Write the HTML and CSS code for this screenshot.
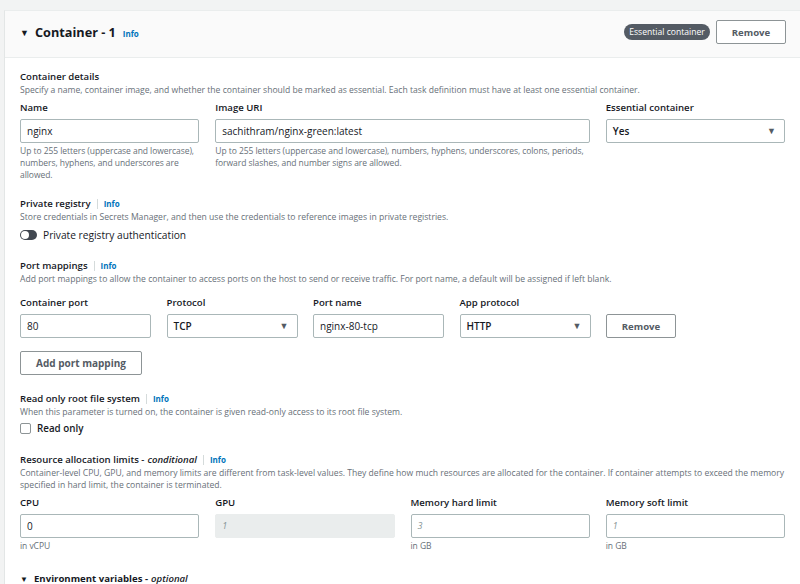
FILE: index.html
```html
<!DOCTYPE html>
<html>
<head>
<meta charset="utf-8">
<link rel="stylesheet" href="styles.css">
</head>
<body>
<div class="page">
  <div class="card">
    <div class="card-header">
      <span class="caret">&#9660;</span>
      <span class="title">Container - 1</span>
      <span class="info info-title">Info</span>
      <span class="spacer"></span>
      <span class="badge">Essential container</span>
      <button class="btn btn-header">Remove</button>
    </div>
    <div class="card-body">
      <section class="sec sec-first">
        <div class="sec-head">Container details</div>
        <div class="desc">Specify a name, container image, and whether the container should be marked as essential. Each task definition must have at least one essential container.</div>
        <div class="grid4 mt5">
          <div class="field">
            <div class="label">Name</div>
            <div class="input">nginx</div>
            <div class="help">Up to 255 letters (uppercase and lowercase), numbers, hyphens, and underscores are allowed.</div>
          </div>
          <div class="field span2">
            <div class="label">Image URI</div>
            <div class="input">sachithram/nginx-green:latest</div>
            <div class="help">Up to 255 letters (uppercase and lowercase), numbers, hyphens, underscores, colons, periods, forward slashes, and number signs are allowed.</div>
          </div>
          <div class="field">
            <div class="label">Essential container</div>
            <div class="input select">Yes<span class="arrow">&#9660;</span></div>
          </div>
        </div>
      </section>

      <section class="sec">
        <div class="sec-head">Private registry <span class="info info-sep">Info</span></div>
        <div class="desc">Store credentials in Secrets Manager, and then use the credentials to reference images in private registries.</div>
        <div class="toggle-row">
          <span class="toggle"><span class="knob"></span></span>
          <span class="toggle-label">Private registry authentication</span>
        </div>
      </section>

      <section class="sec">
        <div class="sec-head">Port mappings <span class="info info-sep">Info</span></div>
        <div class="desc">Add port mappings to allow the container to access ports on the host to send or receive traffic. For port name, a default will be assigned if left blank.</div>
        <div class="grid5 mt11">
          <div class="field">
            <div class="label">Container port</div>
            <div class="input">80</div>
          </div>
          <div class="field">
            <div class="label">Protocol</div>
            <div class="input select">TCP<span class="arrow">&#9660;</span></div>
          </div>
          <div class="field">
            <div class="label">Port name</div>
            <div class="input">nginx-80-tcp</div>
          </div>
          <div class="field">
            <div class="label">App protocol</div>
            <div class="input select">HTTP<span class="arrow">&#9660;</span></div>
          </div>
          <div class="field field-btn">
            <button class="btn btn-row">Remove</button>
          </div>
        </div>
        <button class="btn btn-add">Add port mapping</button>
      </section>

      <section class="sec sec-ro">
        <div class="sec-head">Read only root file system <span class="info info-sep">Info</span></div>
        <div class="desc">When this parameter is turned on, the container is given read-only access to its root file system.</div>
        <div class="check-row">
          <span class="checkbox"></span>
          <span class="check-label">Read only</span>
        </div>
      </section>

      <section class="sec sec-res">
        <div class="sec-head">Resource allocation limits - <i>conditional</i> <span class="info info-sep">Info</span></div>
        <div class="desc">Container-level CPU, GPU, and memory limits are different from task-level values. They define how much resources are allocated for the container. If container attempts to exceed the memory specified in hard limit, the container is terminated.</div>
        <div class="grid4 mt5">
          <div class="field">
            <div class="label">CPU</div>
            <div class="input">0</div>
            <div class="help">in vCPU</div>
          </div>
          <div class="field">
            <div class="label">GPU</div>
            <div class="input disabled"><span class="ph">1</span></div>
          </div>
          <div class="field">
            <div class="label">Memory hard limit</div>
            <div class="input"><span class="ph">3</span></div>
            <div class="help">in GB</div>
          </div>
          <div class="field">
            <div class="label">Memory soft limit</div>
            <div class="input"><span class="ph">1</span></div>
            <div class="help">in GB</div>
          </div>
        </div>
      </section>

      <section class="sec sec-env">
        <div class="sec-head env"><span class="caret caret-small">&#9660;</span> Environment variables - <i>optional</i></div>
      </section>
    </div>
  </div>
</div>
</body>
</html>
```

FILE: styles.css
```css
html, body {
  margin: 0;
  padding: 0;
  overflow: hidden;
  background: #f2f3f3;
}
body {
  font-family: "Open Sans", "Noto Sans", Arial, sans-serif;
  color: #16191f;
}
.page {
  padding: 10px 0 0 4px;
}
.card {
  width: 812px;
  background: #ffffff;
  border-left: 1px solid #e3e6e6;
  border-top: 1px solid #eaeded;
  min-height: 600px;
}
.card-header {
  box-sizing: border-box;
  height: 47px;
  width: 796px;
  background: #fafafa;
  border-bottom: 1px solid #eaeded;
  display: flex;
  align-items: center;
  padding: 0 15px 4px 15px;
}
.caret {
  font-size: 9px;
  width: 15px;
  color: #16191f;
}
.title {
  font-size: 12.7px;
  font-weight: 700;
  margin-right: 7px;
}
.info {
  color: #0073bb;
  font-weight: 700;
  font-size: 8px;
}
.info-title {
  position: relative;
  top: 1px;
}
.spacer { flex: 1; }
.badge {
  background: #545b64;
  color: #fff;
  font-size: 8.6px;
  border-radius: 8px;
  height: 16px;
  line-height: 16px;
  width: 86px;
  text-align: center;
  margin-right: 6px;
}
.btn {
  font-family: inherit;
  background: #fff;
  border: 1px solid #8d9496;
  border-radius: 2px;
  color: #545b64;
  font-weight: 700;
  font-size: 9.6px;
  padding: 0;
  height: 24px;
}
.btn-header { width: 70px; }
.card-body {
  padding: 0 15px;
  width: 765px;
}
.sec { margin-top: 16px; }
.sec-first { margin-top: 12px; }
.sec-head {
  font-size: 9.6px;
  font-weight: 600;
  line-height: 14px;
  height: 14px;
  display: flex;
  align-items: center;
}
.sec-head i { font-weight: 600; margin-left: 3px; }
.info-sep {
  border-left: 1px solid #d5dbdb;
  padding-left: 6px;
  margin-left: 6px;
  line-height: 10px;
}
.desc {
  font-size: 8.6px;
  line-height: 12px;
  color: #687078;
}
.mt5 { margin-top: 5px; }
.mt11 { margin-top: 11px; }
.grid4 {
  display: grid;
  grid-template-columns: repeat(4, 1fr);
  column-gap: 16px;
}
.grid5 {
  display: grid;
  grid-template-columns: 131px 131px 131px 131px 70px;
  column-gap: 15.5px;
}
.span2 { grid-column: span 2; }
.label {
  font-size: 9.6px;
  font-weight: 600;
  line-height: 14px;
  margin-bottom: 4px;
}
.input {
  box-sizing: border-box;
  height: 24px;
  border: 1px solid #aab7b8;
  border-radius: 2px;
  font-size: 10px;
  line-height: 22px;
  padding: 0 6px;
  display: flex;
  align-items: center;
  justify-content: space-between;
}
.input.select { font-weight: 600; }
.arrow {
  font-size: 9px;
  color: #545b64;
  margin-right: 2px;
}
.input.disabled {
  background: #eaeded;
  border-color: #eaeded;
}
.ph {
  color: #879596;
  font-style: italic;
  font-size: 9px;
}
.help {
  font-size: 8.5px;
  line-height: 12px;
  color: #687078;
  margin-top: 2px;
  letter-spacing: -0.05px;
}
.field-btn {
  display: flex;
  align-items: flex-end;
}
.btn-row { width: 70px; }
.btn-add {
  display: block;
  margin-top: 13px;
  width: 122px;
  font-size: 10px;
}
.toggle-row, .check-row {
  display: flex;
  align-items: center;
  margin-top: 4px;
  height: 16px;
}
.check-row { margin-top: 2px; }
.toggle {
  width: 17px;
  height: 10px;
  border-radius: 5px;
  background: #414750;
  position: relative;
  margin-right: 6px;
}
.knob {
  position: absolute;
  left: 1px;
  top: 1px;
  width: 8px;
  height: 8px;
  border-radius: 50%;
  background: #fff;
}
.toggle-label {
  font-size: 10.2px;
}
.checkbox {
  box-sizing: border-box;
  width: 11px;
  height: 11px;
  border: 1px solid #8d9496;
  border-radius: 2px;
  margin-right: 6px;
}
.check-label {
  font-size: 9.8px;
  font-weight: 600;
}
.sec-ro { margin-top: 17px; }
.sec-res { margin-top: 17px; }
.sec-env { margin-top: 20px; }
.env { font-weight: 700; }
.env i { margin-left: 3px; }
.caret-small {
  font-size: 8px;
  width: 14px;
}
```
